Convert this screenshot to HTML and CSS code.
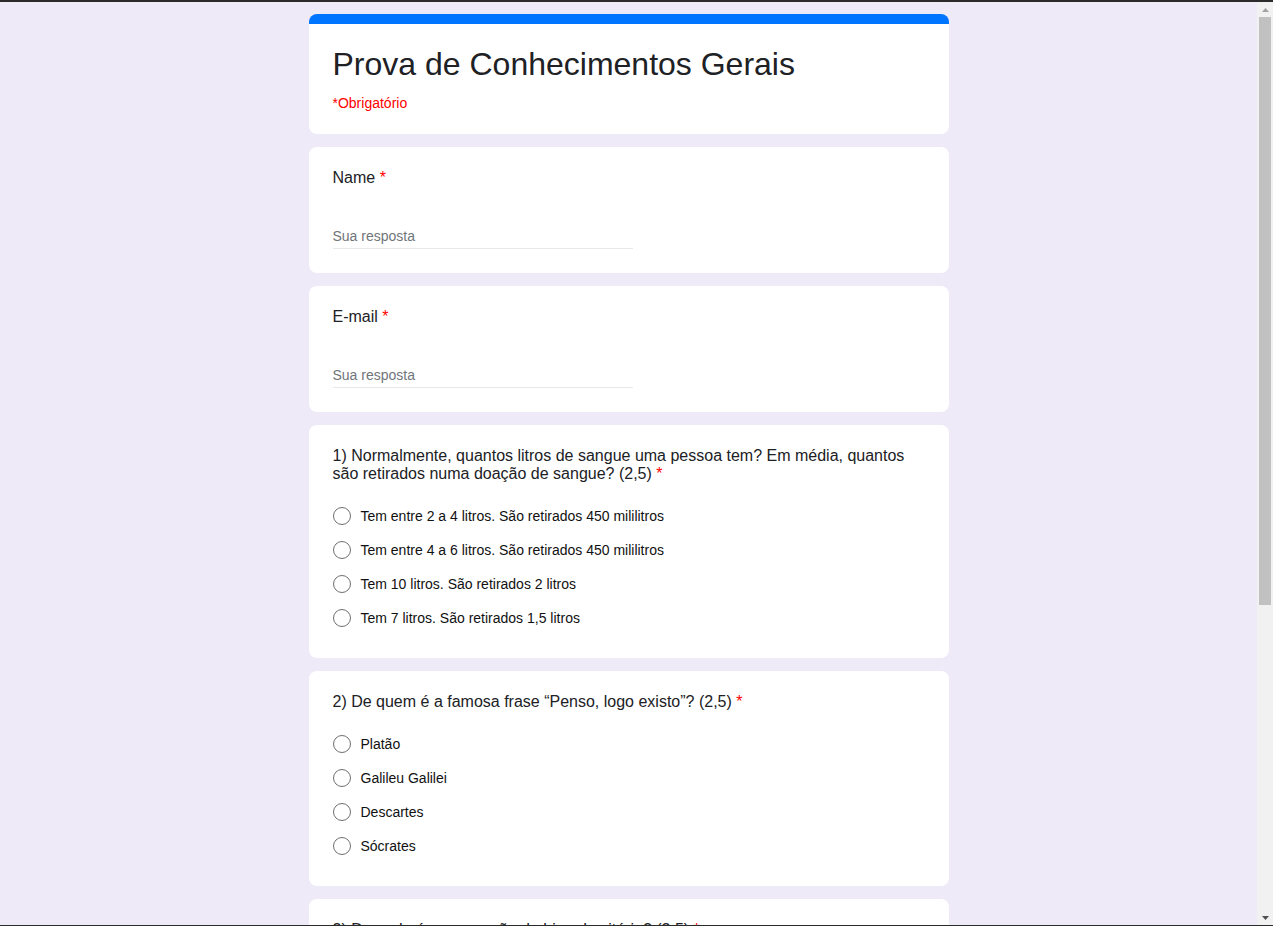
FILE: index.html
```html
<!DOCTYPE html>
<html lang="pt-BR">
<head>
<meta charset="utf-8">
<title>Prova de Conhecimentos Gerais</title>
<link rel="stylesheet" href="styles.css">
</head>
<body>
<div class="viewport">
<main class="form">
  <section class="card card-header">
    <h1 class="form-title">Prova de Conhecimentos Gerais</h1>
    <p class="required-note">*Obrigatório</p>
  </section>

  <section class="card">
    <div class="question">Name <span class="req">*</span></div>
    <input class="answer" type="text" placeholder="Sua resposta">
  </section>

  <section class="card">
    <div class="question">E-mail <span class="req">*</span></div>
    <input class="answer" type="text" placeholder="Sua resposta">
  </section>

  <section class="card">
    <div class="question">1) Normalmente, quantos litros de sangue uma pessoa tem? Em média, quantos são retirados numa doação de sangue? (2,5) <span class="req">*</span></div>
    <div class="options">
      <label class="option"><span class="radio"></span><span>Tem entre 2 a 4 litros. São retirados 450 mililitros</span></label>
      <label class="option"><span class="radio"></span><span>Tem entre 4 a 6 litros. São retirados 450 mililitros</span></label>
      <label class="option"><span class="radio"></span><span>Tem 10 litros. São retirados 2 litros</span></label>
      <label class="option"><span class="radio"></span><span>Tem 7 litros. São retirados 1,5 litros</span></label>
    </div>
  </section>

  <section class="card">
    <div class="question">2) De quem é a famosa frase “Penso, logo existo”? (2,5) <span class="req">*</span></div>
    <div class="options">
      <label class="option"><span class="radio"></span><span>Platão</span></label>
      <label class="option"><span class="radio"></span><span>Galileu Galilei</span></label>
      <label class="option"><span class="radio"></span><span>Descartes</span></label>
      <label class="option"><span class="radio"></span><span>Sócrates</span></label>
    </div>
  </section>

  <section class="card">
    <div class="question">3) De onde é a expressão do hino da vitória? (2,5) <span class="req">*</span></div>
    <div class="options">
      <label class="option"><span class="radio"></span><span>Brasil</span></label>
      <label class="option"><span class="radio"></span><span>Portugal</span></label>
      <label class="option"><span class="radio"></span><span>França</span></label>
      <label class="option"><span class="radio"></span><span>Itália</span></label>
    </div>
  </section>

  <div class="actions">
    <button class="submit" type="button">Enviar</button>
  </div>
</main>
</div>
<div class="scrollbar" aria-hidden="true">
  <div class="sb-btn">
    <svg width="7" height="4" viewBox="0 0 7 4"><path d="M0 4 L3.5 0 L7 4 Z" fill="#a3a3a3"/></svg>
  </div>
  <div class="sb-track"><div class="sb-thumb"></div></div>
  <div class="sb-btn">
    <svg width="7" height="4" viewBox="0 0 7 4"><path d="M0 0 L7 0 L3.5 4 Z" fill="#505050"/></svg>
  </div>
</div>
</body>
</html>
```

FILE: styles.css
```css
html {
  height: 100%;
  overflow: hidden;
}

body {
  margin: 0;
  height: 100%;
  box-sizing: border-box;
  border-top: 2px solid #2b2b2b;
  border-bottom: 1px solid #2b2b2b;
  display: flex;
  background: #eeeaf8;
  font-family: "Liberation Sans", Arial, sans-serif;
  color: #202124;
}

.viewport {
  flex: 1;
  min-width: 0;
  overflow-y: auto;
  scrollbar-width: none;
}

.viewport::-webkit-scrollbar {
  display: none;
}

.scrollbar {
  width: 16px;
  flex: none;
  background: #f1f1f1;
  display: flex;
  flex-direction: column;
}

.sb-btn {
  height: 15px;
  display: flex;
  align-items: center;
  justify-content: center;
}

.sb-track {
  flex: 1;
  padding: 0 2px;
}

.sb-thumb {
  height: 588px;
  background: #c1c1c1;
}

.form {
  width: 640px;
  margin: 12px auto 0;
  padding-bottom: 60px;
  display: flex;
  flex-direction: column;
  gap: 13px;
}

.card {
  background: #ffffff;
  border-radius: 8px;
  padding: 22px 24px 23px;
  display: flex;
  flex-direction: column;
  align-items: flex-start;
}

.card-header {
  border-top: 10px solid #0075ff;
}

.form-title {
  margin: 0;
  font-size: 32px;
  line-height: 36px;
  font-weight: 400;
  color: #202124;
}

.required-note {
  margin: 13px 0 0;
  font-size: 14px;
  line-height: 16px;
  color: #ff0000;
}

.question {
  font-size: 16px;
  line-height: 18px;
  color: #202124;
}

.req {
  color: #ff0000;
}

.answer {
  margin-top: 37px;
  margin-bottom: 1px;
  width: 300px;
  box-sizing: border-box;
  padding: 4px 0;
  font-family: "Liberation Sans", Arial, sans-serif;
  font-size: 14px;
  line-height: 16px;
  color: #202124;
  border: none;
  border-bottom: 1px solid #e8e8e8;
  outline: none;
  background: transparent;
}

.answer::placeholder {
  color: #70757a;
}

.options {
  margin-top: 16px;
  display: flex;
  flex-direction: column;
}

.option {
  display: flex;
  align-items: center;
  gap: 10px;
  padding: 8px 0;
  font-size: 14px;
  line-height: 18px;
  color: #111111;
}

.radio {
  width: 18px;
  height: 18px;
  box-sizing: border-box;
  border: 1px solid #6f6f6f;
  border-radius: 50%;
  flex: none;
}

.actions {
  display: flex;
  padding-top: 8px;
}

.submit {
  font-family: "Liberation Sans", Arial, sans-serif;
  font-size: 14px;
  padding: 10px 24px;
  border: none;
  border-radius: 4px;
  background: #0075ff;
  color: #ffffff;
}
```
